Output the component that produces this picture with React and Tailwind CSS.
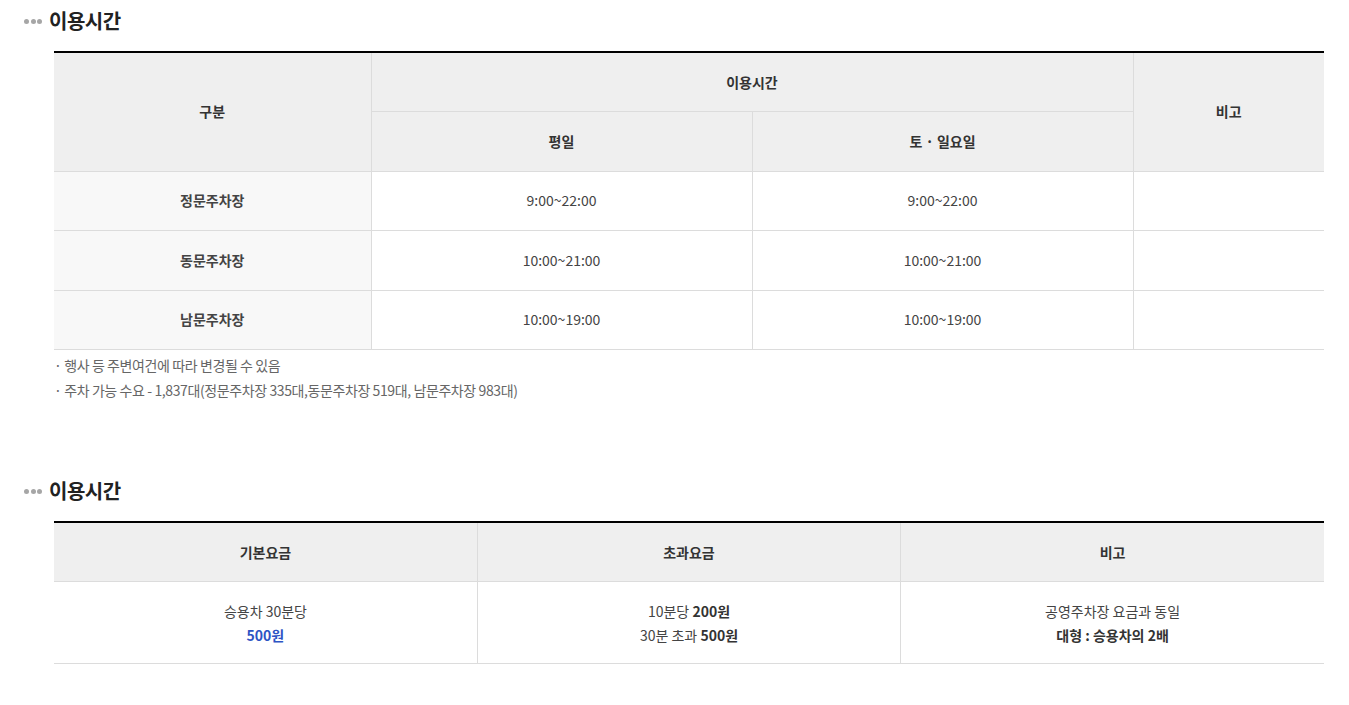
import React from 'react';

const FONT = { fontFamily: '"Noto Sans CJK KR", "Noto Sans", sans-serif' };

function Title({ children }) {
  return (
    <h2 className="flex items-center h-[28px] pl-[24px] text-[20px] font-bold text-[#222] tracking-[-0.5px]">
      <span className="flex gap-[1.5px] mr-[7px]">
        <span className="w-[5px] h-[5px] rounded-full bg-[#a6a6a6]" />
        <span className="w-[5px] h-[5px] rounded-full bg-[#a6a6a6]" />
        <span className="w-[5px] h-[5px] rounded-full bg-[#a6a6a6]" />
      </span>
      {children}
    </h2>
  );
}

const TH = 'h-[59.5px] bg-[#efefef] border border-[#dcdcdc] text-[14px] font-bold text-[#333] text-center';
const TD = 'h-[59.5px] border border-[#dcdcdc] text-[14px] text-[#444] text-center';

const hours = [
  { name: '정문주차장', week: '9:00~22:00', end: '9:00~22:00' },
  { name: '동문주차장', week: '10:00~21:00', end: '10:00~21:00' },
  { name: '남문주차장', week: '10:00~19:00', end: '10:00~19:00' },
];

export default function App() {
  return (
    <div className="bg-white w-[1349px] min-h-[705px] pt-[7px]" style={FONT}>
      <Title>이용시간</Title>
      <div className="ml-[54px] mr-[25px] mt-[16px]">
        <table className="w-full border-collapse border-t-2 border-t-black [&_tr>*:first-child]:border-l-0 [&_tr>*:last-child]:border-r-0">
          <colgroup>
            <col className="w-[317px]" />
            <col className="w-[381px]" />
            <col className="w-[381px]" />
            <col />
          </colgroup>
          <thead>
            <tr>
              <th rowSpan={2} className={TH}>구분</th>
              <th colSpan={2} className={TH}>이용시간</th>
              <th rowSpan={2} className={TH}>비고</th>
            </tr>
            <tr>
              <th className={`${TH} !border-l`}>평일</th>
              <th className={`${TH} !border-r`}>토 · 일요일</th>
            </tr>
          </thead>
          <tbody>
            {hours.map((r) => (
              <tr key={r.name}>
                <th className={`${TD} bg-[#f8f8f8] font-bold text-[#333]`}>{r.name}</th>
                <td className={TD}>{r.week}</td>
                <td className={TD}>{r.end}</td>
                <td className={TD}></td>
              </tr>
            ))}
          </tbody>
        </table>
        <ul className="mt-[3px] text-[14px] text-[#666] tracking-[-0.4px] leading-[25px]">
          <li>· 행사 등 주변여건에 따라 변경될 수 있음</li>
          <li>· 주차 가능 수요 - 1,837대(정문주차장 335대,동문주차장 519대, 남문주차장 983대)</li>
        </ul>
      </div>

      <div className="mt-[74px]">
        <Title>이용시간</Title>
      </div>
      <div className="ml-[54px] mr-[25px] mt-[16px]">
        <table className="w-full table-fixed border-collapse border-t-2 border-t-black [&_tr>*:first-child]:border-l-0 [&_tr>*:last-child]:border-r-0">
          <thead>
            <tr>
              <th className={TH}>기본요금</th>
              <th className={TH}>초과요금</th>
              <th className={TH}>비고</th>
            </tr>
          </thead>
          <tbody>
            <tr>
              <td className={`${TD} h-[82px] leading-[24px]`}>
                승용차 30분당
                <br />
                <b className="text-[#2d54c4]">500원</b>
              </td>
              <td className={`${TD} h-[82px] leading-[24px]`}>
                10분당 <b className="text-[#333]">200원</b>
                <br />
                30분 초과 <b className="text-[#333]">500원</b>
              </td>
              <td className={`${TD} h-[82px] leading-[24px]`}>
                공영주차장 요금과 동일
                <br />
                <b className="text-[#333]">대형 : 승용차의 2배</b>
              </td>
            </tr>
          </tbody>
        </table>
      </div>
    </div>
  );
}
